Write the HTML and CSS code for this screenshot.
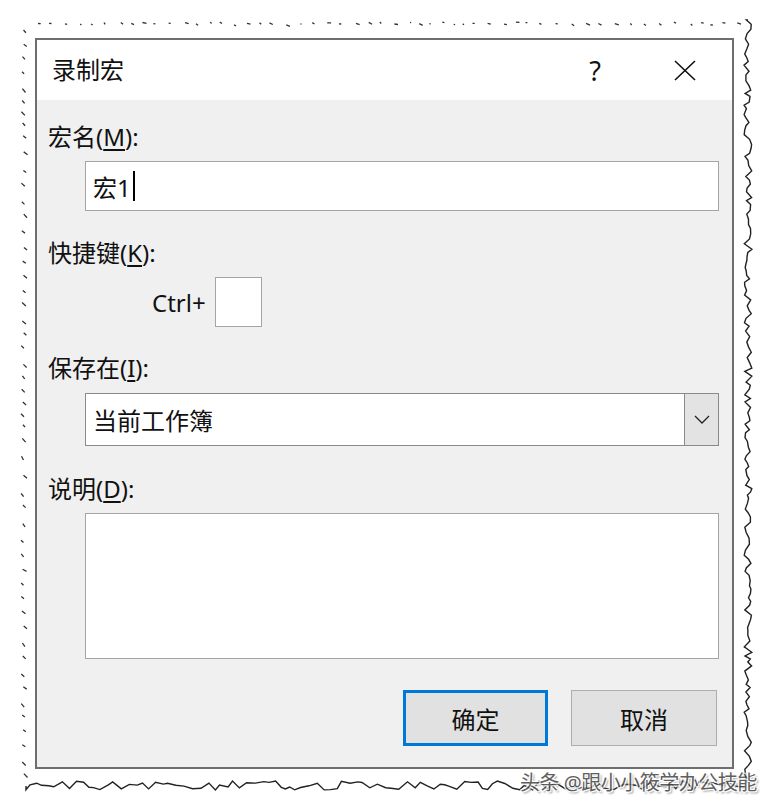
FILE: index.html
```html
<!DOCTYPE html>
<html lang="zh-CN">
<head>
    <meta charset="UTF-8">
    <title>录制宏</title>
    <link rel="stylesheet" href="styles.css">
</head>
<body>
    <div class="page">
        <svg class="torn" id="torn" width="772" height="808"></svg>

        <div class="dialog">
            <div class="titlebar">
                <span class="title">录制宏</span>
                <span class="help">?</span>
                <svg class="close" width="22" height="21" viewBox="0 0 22 21">
                    <path d="M1 1 L21 20 M21 1 L1 20" stroke="#111" stroke-width="1.6" fill="none"/>
                </svg>
            </div>

            <div class="content">
                <div class="label">宏名(<u>M</u>):</div>
                <div class="field name-field">宏1<span class="caret"></span></div>

                <div class="label gap-k">快捷键(<u>K</u>):</div>
                <div class="shortcut">
                    <span class="ctrl">Ctrl+</span>
                    <div class="keybox"></div>
                </div>

                <div class="label gap-i">保存在(<u>I</u>):</div>
                <div class="select">
                    <span class="select-text">当前工作簿</span>
                    <div class="select-btn">
                        <svg width="16" height="9" viewBox="0 0 16 9">
                            <path d="M1 1 L8 8 L15 1" stroke="#222" stroke-width="1.3" fill="none"/>
                        </svg>
                    </div>
                </div>

                <div class="label gap-d">说明(<u>D</u>):</div>
                <div class="field memo"></div>

                <div class="buttons">
                    <button class="btn btn-ok">确定</button>
                    <button class="btn">取消</button>
                </div>
            </div>
        </div>

        <div class="watermark">头条 @跟小小筱学办公技能</div>
    </div>

    <script>
        // hand-torn screenshot edge: dotted top/left, jagged right/bottom
        const svg = document.getElementById('torn');
        let seed = 7;
        function rnd() {
            seed = (seed * 9301 + 49297) % 233280;
            return seed / 233280;
        }

        let marks = '';
        for (let x = 38; x < 745; x += 9 + rnd() * 8) {
            const y = 22 + rnd() * 3;
            marks += `M${x.toFixed(1)} ${y.toFixed(1)} l${(1 + rnd() * 3).toFixed(1)} ${(rnd() * 2).toFixed(1)} `;
        }
        for (let y = 30; y < 780; y += 11 + rnd() * 8) {
            const x = 21 + rnd() * 3;
            marks += `M${x.toFixed(1)} ${y.toFixed(1)} l${(2 + rnd() * 2).toFixed(1)} ${(2 + rnd() * 2).toFixed(1)} `;
        }

        let right = 'M748 20';
        for (let y = 20; y < 786; y += 3 + rnd() * 3) {
            const x = 744 + rnd() * 8;
            right += ` L${x.toFixed(1)} ${y.toFixed(1)}`;
        }

        let bottom = 'M26 786';
        for (let x = 26; x < 748; x += 4 + rnd() * 5) {
            const y = 781 + rnd() * 9;
            bottom += ` L${x.toFixed(1)} ${y.toFixed(1)}`;
        }

        svg.innerHTML =
            `<path d="${marks}" stroke="#333" stroke-width="1.3" fill="none"/>` +
            `<path d="${right}" stroke="#222" stroke-width="1.4" fill="none"/>` +
            `<path d="${bottom}" stroke="#222" stroke-width="1.4" fill="none"/>`;
    </script>
</body>
</html>
```

FILE: styles.css
```css
body { margin: 0; background: #fff; font-family: "Noto Sans", "Noto Sans CJK SC", sans-serif; color: #111; }
.page { position: relative; width: 772px; height: 808px; overflow: hidden; }
.torn { position: absolute; left: 0; top: 0; pointer-events: none; }

.dialog { position: relative; margin: 38px 0 0 35px; width: 695px; height: 727px; border: 2px solid #6e6e6e; background: #f0f0f0; display: flex; flex-direction: column; }

.titlebar { height: 60px; background: #fff; display: flex; align-items: center; padding: 0 36px 0 15px; }
.title { font-size: 24px; flex: 1; margin-top: -3px; }
.help { font-size: 27px; margin-right: 73px; line-height: 1; }

.content { padding: 22px 13px 0 11px; }
.label { font-size: 24px; line-height: 30px; height: 30px; }
.label u { text-underline-offset: 3px; }
.gap-k { margin-top: 27px; }
.gap-i { margin-top: 26px; }
.gap-d { margin-top: 28px; }

.field { margin: 9px 0 0 37px; height: 48px; background: #fff; border: 1px solid #a5a5a5; }
.name-field { display: flex; align-items: center; padding-left: 7px; font-size: 24px; }
.caret { display: inline-block; width: 2px; height: 30px; background: #000; margin-left: 2px; }
.memo { height: 144px; }

.shortcut { margin-top: 9px; height: 50px; display: flex; align-items: center; gap: 9px; padding-left: 104px; }
.ctrl { font-size: 24px; }
.keybox { width: 45px; height: 48px; background: #fff; border: 1px solid #a5a5a5; }

.select { margin: 10px 0 0 37px; height: 51px; display: flex; background: #fff; border: 1px solid #8a8a8a; }
.select-text { flex: 1; display: flex; align-items: center; padding-left: 7px; font-size: 24px; }
.select-btn { width: 33px; background: #e3e3e3; border-left: 1px solid #8a8a8a; display: flex; align-items: center; justify-content: center; }

.buttons { margin-top: 31px; display: flex; justify-content: flex-end; gap: 23px; padding-right: 2px; }
.btn { width: 146px; height: 56px; font-family: inherit; font-size: 24px; color: #111; background: #e1e1e1; border: 1px solid #adadad; padding: 0; }
.btn-ok { width: 145px; border: 3px solid #0078d7; }

.watermark { position: absolute; left: 520px; top: 767px; font-size: 20px; white-space: nowrap; color: #444; letter-spacing: -0.5px; text-shadow: 1px 1px 0 #fff, -1px -1px 0 #fff, 1px -1px 0 #fff, -1px 1px 0 #fff, 2px 2px 2px #888; opacity: 0.85; }
```
